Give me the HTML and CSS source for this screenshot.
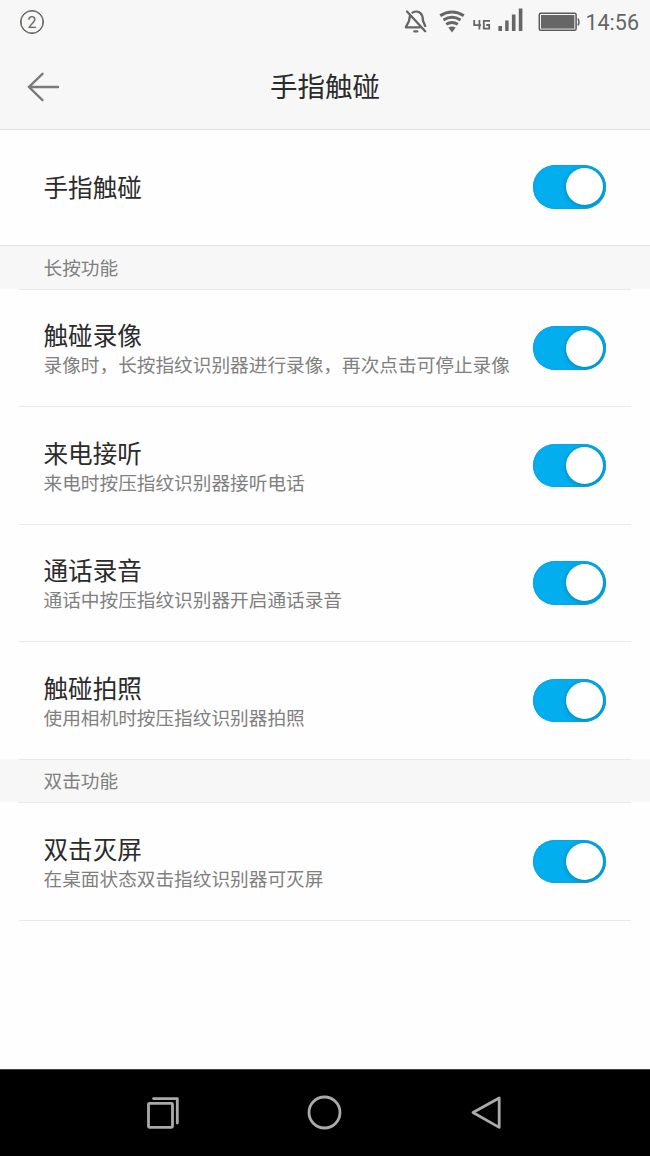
FILE: index.html
```html
<!DOCTYPE html>
<html lang="zh-CN">
<head>
    <meta charset="UTF-8">
    <meta name="viewport" content="width=device-width, initial-scale=1.0">
    <title>手指触碰</title>
    <link rel="stylesheet" href="styles.css">
</head>
<body>

    <div class="status-bar">
        <span class="badge">2</span>
        <div class="status-icons">
            <svg class="icon-bell" width="24" height="26" viewBox="0 0 24 26" fill="none" stroke="#666" stroke-width="2.3" stroke-linecap="round" stroke-linejoin="round">
                <path d="M5.8 7.5L5 12L1.8 18.3H16M8.5 3.6C11 2 14.5 2.2 16.5 4.2Q18.8 6.4 18.9 11.5L21.2 17M3 2.5L21.2 22.2"/>
                <path d="M10.3 22.4h3" stroke-width="2.2"/>
            </svg>
            <svg class="icon-wifi" width="26" height="24" viewBox="0 0 26 24" fill="none" stroke="#666" stroke-width="3">
                <path d="M1.2 5.6Q13 -1.6 24.8 5.6"/>
                <path d="M4.5 10Q13 4.6 21.5 10"/>
                <path d="M7.2 14.2Q13 10.6 18.8 14.2"/>
                <path d="M9.3 17.6Q13 15.3 16.7 17.6L13 22.5z" fill="#666" stroke="none"/>
            </svg>
            <svg class="icon-4g" width="18" height="12" viewBox="0 0 18 12" fill="none" stroke="#666" stroke-width="1.8">
                <path d="M1.2 1v5.2H8M6.4 1v9.6M17 1.9h-6.2v7.8h5.4V6H13.2"/>
            </svg>
            <svg class="icon-signal" width="25" height="24" viewBox="0 0 25 24" fill="#666">
                <path d="M.4 18H4v5H.4zM7.2 12.5h3.4V23H7.2zM13.9 6.5h3.6V23h-3.6zM20.8 .5h3.6V23h-3.6z"/>
            </svg>
            <svg class="icon-battery" width="42" height="20" viewBox="0 0 42 20" fill="none">
                <rect x="1.3" y="1.3" width="36.8" height="17" rx="1.5" stroke="#5a5a5a" stroke-width="1.5"/>
                <rect x="3" y="3" width="33.4" height="13.6" fill="#666"/>
                <path d="M40 6.5q1.8 3.4 0 6.8" stroke="#666" stroke-width="1.6"/>
            </svg>
            <span class="time">14:56</span>
        </div>
    </div>

    <div class="header">
        <svg class="back" width="34" height="32" viewBox="0 0 34 32" fill="none" stroke="#7a7a7a" stroke-width="2.4" stroke-linecap="round">
            <path d="M2 16h29M15.5 2.8L2 16l13.5 13.2"/>
        </svg>
        <h1>手指触碰</h1>
    </div>

    <div class="main">
        <div class="row row-main">
            <div class="text"><h2>手指触碰</h2></div>
            <div class="switch"></div>
        </div>

        <div class="section section-full">长按功能</div>

        <div class="row">
            <div class="text">
                <h2>触碰录像</h2>
                <p>录像时，长按指纹识别器进行录像，再次点击可停止录像</p>
            </div>
            <div class="switch"></div>
        </div>
        <div class="row">
            <div class="text">
                <h2>来电接听</h2>
                <p>来电时按压指纹识别器接听电话</p>
            </div>
            <div class="switch"></div>
        </div>
        <div class="row">
            <div class="text">
                <h2>通话录音</h2>
                <p>通话中按压指纹识别器开启通话录音</p>
            </div>
            <div class="switch"></div>
        </div>
        <div class="row">
            <div class="text">
                <h2>触碰拍照</h2>
                <p>使用相机时按压指纹识别器拍照</p>
            </div>
            <div class="switch"></div>
        </div>

        <div class="section">双击功能</div>

        <div class="row">
            <div class="text">
                <h2>双击灭屏</h2>
                <p>在桌面状态双击指纹识别器可灭屏</p>
            </div>
            <div class="switch"></div>
        </div>
        <div class="list-end"></div>
    </div>

    <div class="nav-bar">
        <svg width="34" height="34" viewBox="0 0 34 34" fill="none" stroke="#aaa" stroke-width="2.8" stroke-linecap="round" stroke-linejoin="round">
            <rect x="2.5" y="7.3" width="24" height="24" rx="1"/>
            <path d="M7.5 2.6H31.3V27"/>
        </svg>
        <svg width="36" height="36" viewBox="0 0 36 36" fill="none" stroke="#aaa" stroke-width="2.8">
            <circle cx="17.5" cy="17.5" r="15.5"/>
        </svg>
        <svg width="32" height="36" viewBox="0 0 32 36" fill="none" stroke="#aaa" stroke-width="2.8" stroke-linejoin="round">
            <path d="M3 17.5L29.2 3v29.4z"/>
        </svg>
    </div>

</body>
</html>
```
FILE: styles.css
```css
* {
    box-sizing: border-box;
}
body {
    margin: 0;
    height: 1156px;
    display: flex;
    flex-direction: column;
    font-family: Roboto, "Noto Sans CJK SC", sans-serif;
    background-color: #fefefe;
    color: #2b2b2b;
    overflow: hidden;
}
h1, h2, p {
    margin: 0;
    font-weight: normal;
}

/* Status bar */
.status-bar {
    height: 44px;
    display: flex;
    justify-content: space-between;
    padding: 0 11px 0 20px;
    background-color: #f7f7f7;
    color: #666;
}
.badge {
    width: 24px;
    height: 24px;
    margin-top: 10px;
    border: 1.5px solid #555;
    border-radius: 50%;
    box-shadow: inset 0 0 0 .5px #555;
    font-size: 16px;
    line-height: 23px;
    text-align: center;
}
.status-icons {
    display: flex;
    align-items: flex-start;
}
.icon-bell { margin: 9px 11px 0 0; }
.icon-wifi { margin: 10px 8px 0 0; }
.icon-4g { margin: 19px 7px 0 0; }
.icon-signal { margin: 8px 15px 0 0; }
.icon-battery { margin: 12px 5px 0 0; }
.time {
    margin-top: 9px;
    font-size: 21.5px;
    line-height: 28px;
}

/* Header */
.header {
    height: 86px;
    display: grid;
    grid-template-columns: 60px 1fr 60px;
    align-items: center;
    border-bottom: 1px solid #e2e2e2;
    background-color: #f7f7f7;
}
.header h1 {
    grid-column: 2;
    padding-top: 3px;
    font-size: 27.5px;
    line-height: 40px;
    text-align: center;
}
.back {
    margin-left: 27px;
}

/* Settings list */
.main {
    flex: 1;
}
.row {
    height: 117.4px;
    display: flex;
    justify-content: space-between;
    align-items: center;
    padding: 1px 44.5px 0 43.5px;
    background: linear-gradient(#e9e9e9, #e9e9e9) 19px 0 / 612px 1px no-repeat;
}
.row-main {
    height: 115px;
    padding-top: 0;
    background: none;
}
.row .text {
    padding-top: 7.4px;
}
.row-main .text {
    padding-top: 2px;
}
.row h2 {
    font-size: 24.6px;
    line-height: 30px;
}
.row p {
    font-size: 18.67px;
    line-height: 29px;
    color: #808080;
    white-space: nowrap;
}
.section {
    height: 43.8px;
    padding-left: 43.5px;
    font-size: 18.67px;
    line-height: 47px;
    color: #808080;
    background: linear-gradient(#e9e9e9, #e9e9e9) 19px 0 / 612px 1px no-repeat #f7f7f7;
}
.section-full {
    height: 44px;
    border-top: 1px solid #e2e2e2;
    background: #f7f7f7;
}
.list-end {
    height: 1px;
    margin: 0 19px;
    background-color: #e9e9e9;
}

/* Switch, always on */
.switch {
    width: 72.5px;
    height: 43.5px;
    padding: 3.2px 2.8px;
    border-radius: 22px;
    background-color: #02aeee;
    box-shadow: inset 0 0 1px 1px #0ba3e0;
    overflow: hidden;
}
.row-main .switch {
    margin-bottom: 1px;
}
.switch::after {
    content: "";
    display: block;
    width: 37px;
    height: 37px;
    margin-left: auto;
    border-radius: 50%;
    background-color: #fff;
    box-shadow: 0 1px 5px rgba(0, 60, 90, 0.4);
}

/* Navigation keys */
.nav-bar {
    height: 87px;
    display: flex;
    justify-content: space-between;
    align-items: center;
    padding: 0 148px 0 146px;
    border-top: 1px solid #444;
    background-color: #000;
}
```
